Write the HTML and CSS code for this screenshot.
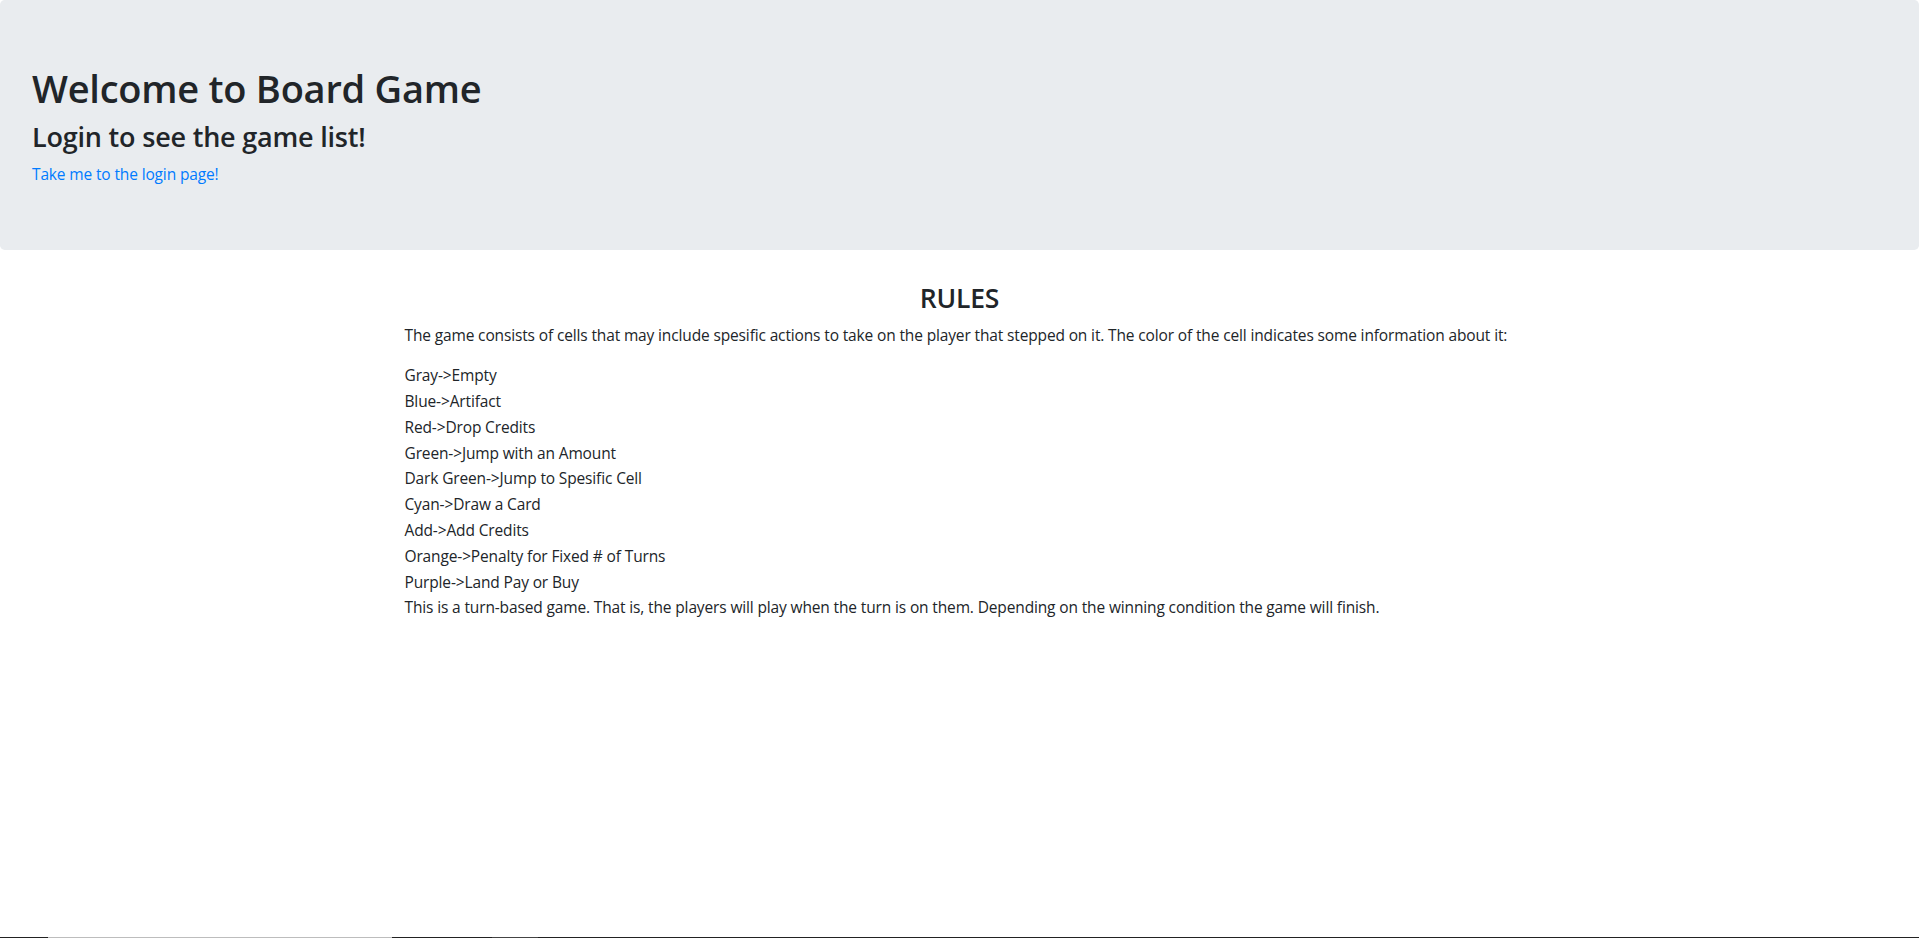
FILE: index.html
```html
<!DOCTYPE html>
<html lang="en">
<head>
<meta charset="utf-8">
<title>Board Game</title>
<link rel="stylesheet" href="styles.css">
</head>
<body>
<div class="page">
  <header class="jumbotron">
    <h1 class="title">Welcome to Board Game</h1>
    <h3 class="subtitle">Login to see the game list!</h3>
    <a class="login-link" href="#">Take me to the login page!</a>
  </header>
  <main class="container">
    <h3 class="rules-title">RULES</h3>
    <p class="intro">The game consists of cells that may include spesific actions to take on the player that stepped on it. The color of the cell indicates some information about it:</p>
    <div class="rule-lines">
      <div>Gray-&gt;Empty</div>
      <div>Blue-&gt;Artifact</div>
      <div>Red-&gt;Drop Credits</div>
      <div>Green-&gt;Jump with an Amount</div>
      <div>Dark Green-&gt;Jump to Spesific Cell</div>
      <div>Cyan-&gt;Draw a Card</div>
      <div>Add-&gt;Add Credits</div>
      <div>Orange-&gt;Penalty for Fixed # of Turns</div>
      <div>Purple-&gt;Land Pay or Buy</div>
      <div>This is a turn-based game. That is, the players will play when the turn is on them. Depending on the winning condition the game will finish.</div>
    </div>
  </main>
  <div class="bottom-strip">
    <span class="seg dark s1"></span>
    <span class="seg light s2"></span>
    <span class="seg dark s3"></span>
    <span class="seg mid s4"></span>
    <span class="seg dark s5"></span>
  </div>
</div>
</body>
</html>
```
FILE: styles.css
```css
* { box-sizing: border-box; }
html, body { margin: 0; padding: 0; }
body {
  font-family: "Open Sans", "Noto Sans", sans-serif;
  font-size: 15.5px;
  letter-spacing: -0.14px;
  line-height: 24px;
  color: #212529;
  background: #fff;
}
.page {
  min-height: 100vh;
  display: flex;
  flex-direction: column;
}
.jumbotron {
  background: #e9ecef;
  border-radius: 4.8px;
  padding: 64px 32px;
  margin-bottom: 32px;
  display: flex;
  flex-direction: column;
  align-items: flex-start;
}
.title {
  margin: 0 0 8px;
  font-size: 38px;
  font-weight: 600;
  letter-spacing: -0.25px;
  line-height: 48px;
}
.subtitle {
  margin: 0 0 8px;
  font-size: 27px;
  font-weight: 600;
  letter-spacing: -0.2px;
  line-height: 33.6px;
}
.login-link {
  color: #007bff;
  text-decoration: none;
  line-height: 24px;
}
.container {
  width: 100%;
  max-width: 1140px;
  margin: 0 auto;
  padding: 0 15px;
}
.rules-title {
  margin: 0 0 8px;
  font-size: 26.5px;
  font-weight: 600;
  letter-spacing: -0.2px;
  line-height: 33.6px;
  text-align: center;
}
.intro { margin: 0 0 16px; }
.rule-lines div { line-height: 25.8px; }
.bottom-strip {
  margin-top: auto;
  display: flex;
  height: 1px;
}
.seg { display: block; height: 1px; }
.dark { background: #222; }
.light { background: #bdbdbd; }
.mid { background: #444; }
.s1 { width: 48px; }
.s2 { width: 344px; }
.s3 { width: 100px; }
.s4 { width: 46px; }
.s5 { flex: 1; }
```
